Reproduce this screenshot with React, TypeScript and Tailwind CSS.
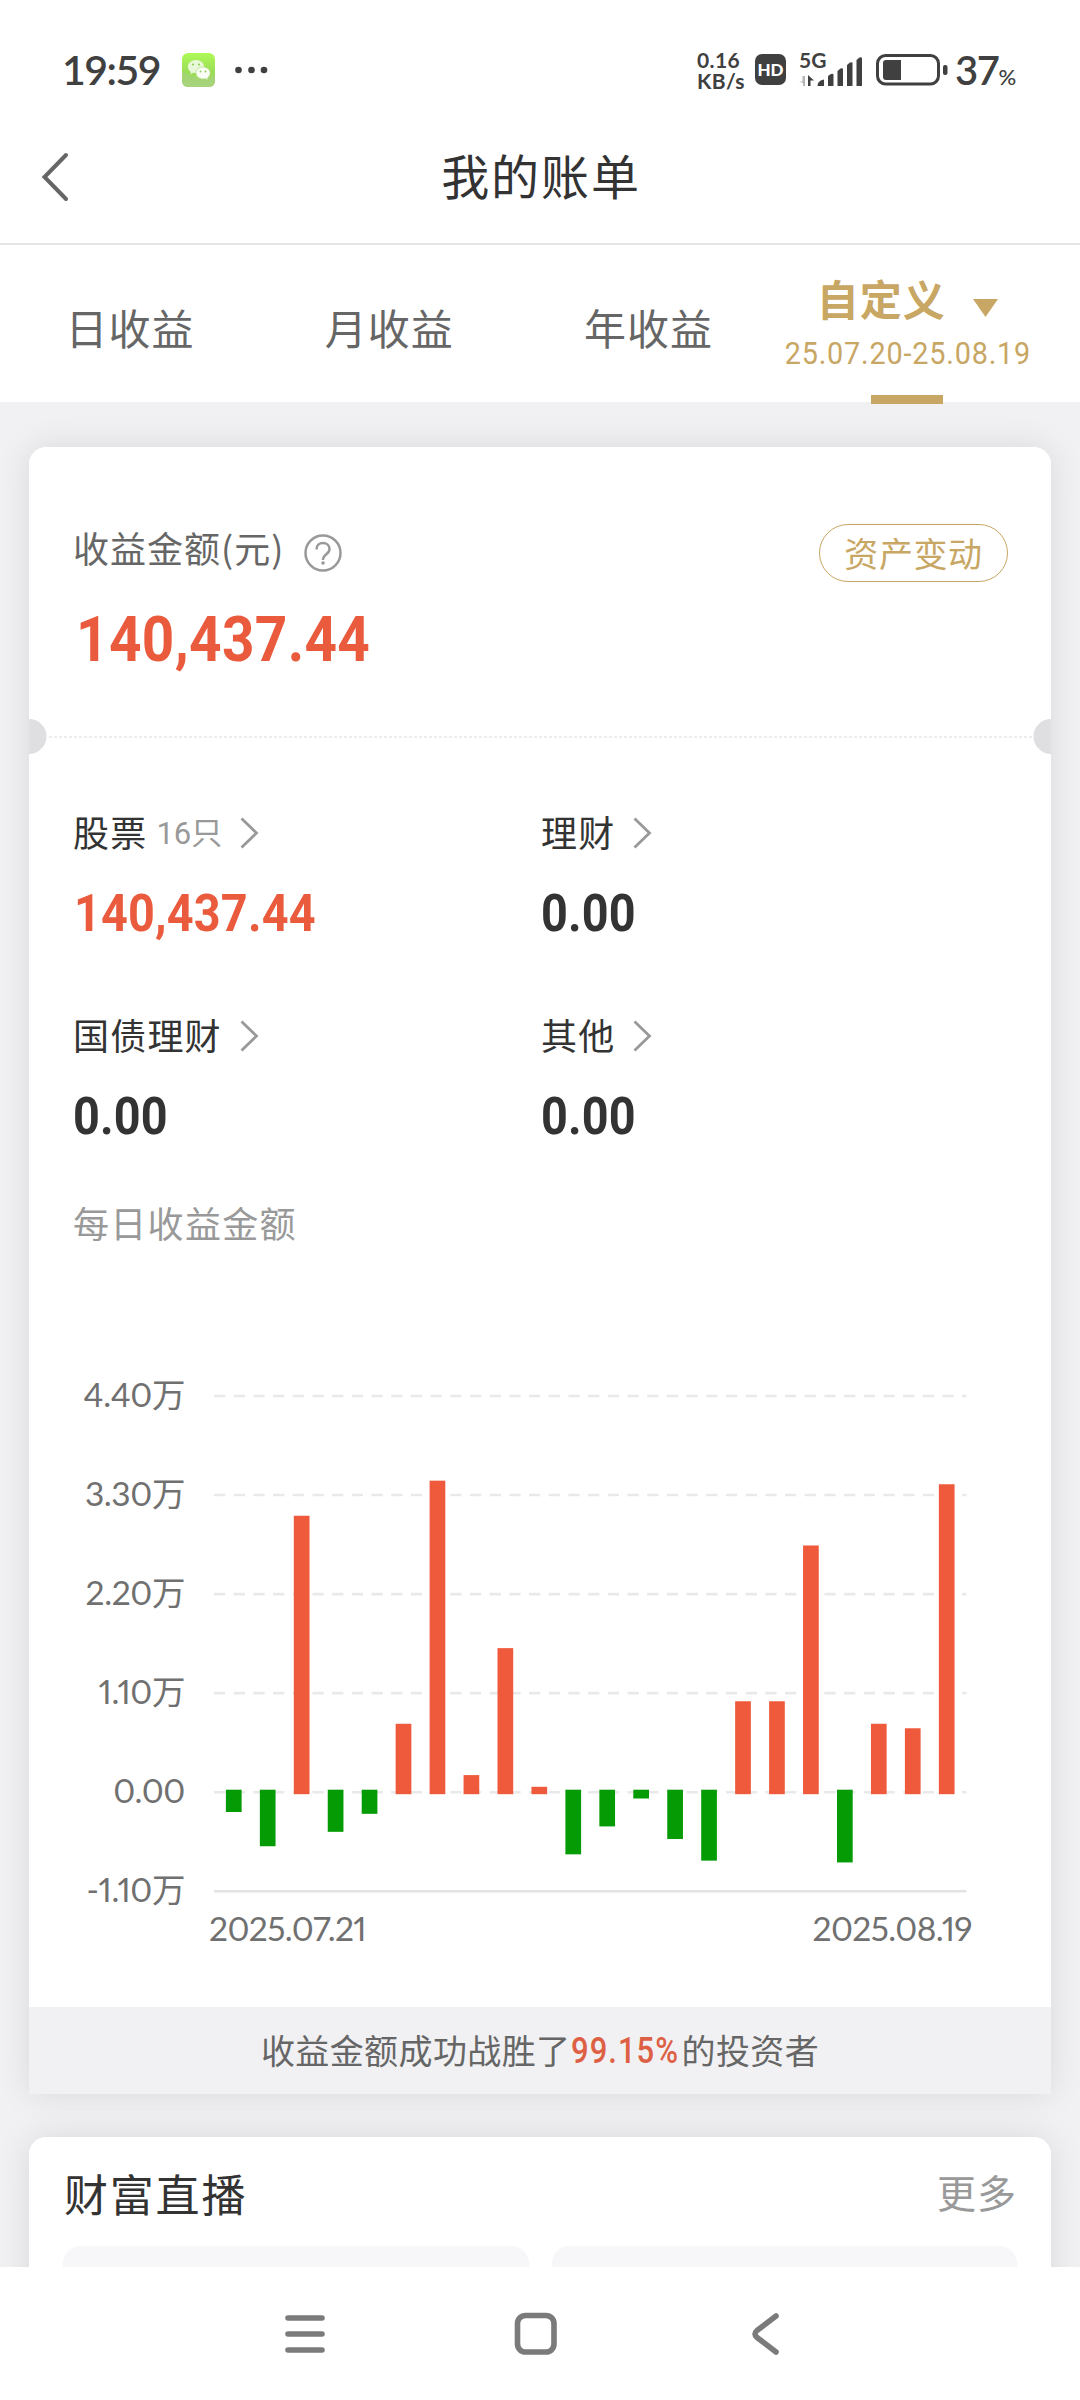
interface Holding {
  label: string;
  count?: string;
  amount: string;
  highlight?: boolean;
}

const holdings: Holding[] = [
  { label: "股票", count: "16只", amount: "140,437.44", highlight: true },
  { label: "理财", amount: "0.00" },
  { label: "国债理财", amount: "0.00" },
  { label: "其他", amount: "0.00" },
];

const tabs = ["日收益", "月收益", "年收益"];

// Daily profit, in 万
const dailyProfit = [
  -0.22, -0.6, 3.07, -0.44, -0.24, 0.76, 3.46, 0.19, 1.6, 0.06, -0.69, -0.38,
  -0.07, -0.52, -0.76, 1.01, 1.01, 2.74, -0.78, 0.76, 0.71, 3.42,
];

const yLabels = ["4.40万", "3.30万", "2.20万", "1.10万", "0.00", "-1.10万"];

const STEP = 99.05;
const TOP = 2;
const ZERO = TOP + STEP * 4;
const PER_WAN = STEP / 1.1;

function WeChatIcon() {
  return (
    <svg width="33" height="34" viewBox="0 0 33 34">
      <defs>
        <linearGradient id="wechat" x1="0" y1="0" x2="0" y2="1">
          <stop offset="0" stopColor="#adfa56" />
          <stop offset="0.6" stopColor="#9bdb58" />
          <stop offset="1" stopColor="#add584" />
        </linearGradient>
      </defs>
      <rect width="33" height="34" rx="6" fill="url(#wechat)" />
      <path d="M0 19 C6 20 10 26 20 26 C26 26 30 24 33 23 V28 Q33 34 27 34 H6 Q0 34 0 28Z" fill="#a5d37b" opacity="0.7" />
      <path d="M14 7c-4.600 0-8 3-8 6.700 0 2.200 1.100 4 2.900 5.200l-.8 2.400 3-1.500c1 .3 2 .4 3 .4 4.500 0 8-2.900 8-6.500S18.600 7 14 7Z" fill="#e9f8d8" />
      <path d="M21 14c-4 0-7 2.700-7 6s3 6 7 6c.9 0 1.700-.1 2.500-.3l2.600 1.500-.6-2.300c1.600-1.100 2.700-2.900 2.700-4.900 0-3.300-3.200-6-7.200-6Z" fill="#fbfef6" stroke="#a0d967" strokeWidth="0.6" />
      <g fill="#8fcf58">
        <circle cx="11" cy="11.500" r="1.100" />
        <circle cx="17" cy="11.500" r="1.100" />
        <circle cx="18.500" cy="18.500" r="1" />
        <circle cx="23.500" cy="18.500" r="1" />
      </g>
    </svg>
  );
}

function SignalIcon() {
  return (
    <svg width="63" height="12" viewBox="0 0 63 12" className="overflow-visible">
      <path d="M6 1v10H4V8L0 6.500h3.500V1Z" fill="#b5b5b5" />
      <path d="M9 11V0l6 5.500h-3.500V11Z" fill="#404040" />
      <g fill="#404040">
        <path d="M18.500 11 Q18.500 5.500 25 4.500 V11Z" />
        <path d="M29 11V1l3-2q2.500-1 2.500 1v11Z" />
        <path d="M38.500 11V-4l3-2.500q2.500-1 2.500 1V11Z" />
        <path d="M48 11V-10l3-2.500q2.500-1 2.500 1V11Z" />
        <path d="M57.500 11V-15l3-2.500q2.500-1 2.500 1V11Z" />
      </g>
    </svg>
  );
}

function StatusBar() {
  return (
    <div className="flex h-[139px] items-center justify-between pl-[62px] pr-[64px] font-['Lato',sans-serif] text-[#404040]">
      <div className="flex items-center">
        <span className="w-[120px] text-[41px] leading-none font-semibold tracking-[-1.500px]">19:59</span>
        <WeChatIcon />
        <svg width="34" height="8" className="ml-5">
          <circle cx="3.500" cy="4" r="3.300" fill="#404040" />
          <circle cx="16.500" cy="4" r="3.300" fill="#404040" />
          <circle cx="29" cy="4" r="3.300" fill="#404040" />
        </svg>
      </div>
      <div className="flex items-center">
        <div className="w-[58px] text-[21px] leading-[21px] font-bold tracking-[0.400px]">
          <p>0.16</p>
          <p>KB/s</p>
        </div>
        <div className="flex h-[31px] w-[31px] items-center justify-center rounded-[7px] bg-[#404040] text-[17px] leading-none font-black text-white">
          HD
        </div>
        <div className="ml-[13px] flex h-[38px] w-[63px] flex-col justify-between pb-[2px]">
          <span className="text-[21px] leading-[17px] font-bold">5G</span>
          <SignalIcon />
        </div>
        <svg width="72" height="32" viewBox="0 0 72 32" className="ml-[14px]">
          <rect x="1.500" y="1.500" width="61" height="28.500" rx="8" fill="none" stroke="#404040" strokeWidth="3" />
          <path d="M7 9q0-3 3-3h15v20H10q-3 0-3-3Z" fill="#404040" />
          <rect x="67" y="11" width="4.500" height="10" rx="2" fill="#404040" />
        </svg>
        <div className="ml-[7px] flex w-[61px] items-baseline">
          <span className="text-[40px] leading-none font-semibold tracking-[-1.500px]">37</span>
          <span className="text-[22px] leading-none font-medium">%</span>
        </div>
      </div>
    </div>
  );
}

function Header() {
  return (
    <header className="grid h-[106px] grid-cols-[1fr_auto_1fr] items-start border-b-2 border-[#e5e5e5]">
      <svg width="30" height="50" viewBox="0 0 30 50" className="mt-[13px] ml-[41px]" fill="none" stroke="#666" strokeWidth="4" strokeLinecap="round">
        <path d="M25 3 3.500 25 25 47" />
      </svg>
      <h1 className="mt-[11px] ml-[2px] text-[48px] leading-none tracking-[1.900px] text-[#333]">我的账单</h1>
    </header>
  );
}

function Tabs() {
  return (
    <nav className="grid h-[157px] grid-cols-4 pr-[43px]">
      {tabs.map((tab) => (
        <div key={tab} className="pt-[61px] pl-px text-center text-[42px] leading-none tracking-[1px] text-[#666]">
          {tab}
        </div>
      ))}
      <div className="flex flex-col items-center text-[#c8a664]">
        <div className="mt-[32px] flex items-center">
          <span className="text-[42px] leading-none font-bold tracking-[1px]">自定义</span>
          <svg width="25" height="18" className="mt-[20px] ml-[27px]">
            <path d="M0 0h25L12.500 18Z" fill="#c8a664" />
          </svg>
        </div>
        <span className="mt-[18px] scale-x-90 font-['Roboto',sans-serif] text-[32px] leading-none tracking-[0.900px] whitespace-nowrap">
          25.07.20-25.08.19
        </span>
        <div className="z-10 mt-[26px] h-[9px] w-[72px] shrink-0 bg-[#c8a664]" />
      </div>
    </nav>
  );
}

function Chevron() {
  return (
    <svg width="19" height="32" viewBox="0 0 19 32" fill="none" stroke="#999" strokeWidth="2.800">
      <path d="M1.500 1.500 16.500 16 1.500 30.500" />
    </svg>
  );
}

function Summary() {
  return (
    <section className="flex h-[289px] justify-between pt-[72px] pr-[43px] pl-[44px]">
      <div>
        <div className="flex items-center">
          <span className="mt-[3px] text-[36px] leading-[38px] tracking-[1px] text-[#666]">收益金额(元)</span>
          <svg width="38" height="38" viewBox="0 0 38 38" className="mt-[15px] ml-[20px]" fill="none" stroke="#999" strokeWidth="2.500">
            <circle cx="19" cy="19" r="17.500" />
            <path d="M12.500 15.500c0-4 2.800-6.500 6.500-6.500s6.500 2.400 6.500 6c0 2.600-1.500 4-3.500 5.500-2 1.600-3 2.700-3 5.500" />
            <circle cx="19" cy="29" r="1.800" fill="#999" stroke="none" />
          </svg>
        </div>
        <div className="mt-[36px] ml-[3px] w-[320px] origin-left scale-x-90 font-['Roboto',sans-serif] text-[63px] leading-none font-bold tracking-[0.400px] text-[#ea5b3e]">
          140,437.44
        </div>
      </div>
      <button className="mt-[5px] h-[58px] w-[189px] rounded-full border-[1.500px] border-[#c8a664] text-[34px] leading-none tracking-[0.600px] text-[#c8a664]">
        资产变动
      </button>
    </section>
  );
}

// Ticket-style separator with a notch on either edge
function TicketDivider() {
  return (
    <svg width="1022" height="35" viewBox="0 0 1022 35" className="-my-[17px] shrink-0">
      <circle cx="0" cy="17.500" r="17.500" fill="#dfdfe2" />
      <circle cx="1022" cy="17.500" r="17.500" fill="#dfdfe2" />
      <line x1="20" x2="1004" y1="18" y2="18" stroke="#ededed" strokeWidth="2" strokeDasharray="3 2" />
    </svg>
  );
}

function HoldingCell({ item }: { item: Holding }) {
  return (
    <div className="h-[203px]">
      <div className="flex h-[38px] items-center">
        <span className="pb-[4px] text-[36px] leading-none tracking-[1.200px] text-[#333]">{item.label}</span>
        {item.count && (
          <span className="ml-[9px] font-['Roboto','Noto_Sans_CJK_SC',sans-serif] text-[31px] leading-none text-[#999]">
            {item.count}
          </span>
        )}
        <span className="ml-[18px]">
          <Chevron />
        </span>
      </div>
      <div
        className={`mt-[36px] w-[280px] origin-left scale-x-90 font-['Roboto',sans-serif] text-[52px] leading-none font-bold tracking-[0.200px] ${
          item.highlight ? "ml-px text-[#ea5b3e]" : "text-[#333]"
        }`}
      >
        {item.amount}
      </div>
    </div>
  );
}

function ProfitChart() {
  return (
    <div className="pt-[105px] pl-[45px]">
      <div className="flex">
        <div className="w-[111px]">
          {yLabels.map((label) => (
            <div
              key={label}
              className="flex h-[99px] items-center justify-end font-['Lato','Noto_Sans_CJK_SC',sans-serif] text-[33.500px] leading-none tracking-[-0.400px] proportional-nums whitespace-nowrap text-[#707070]"
            >
              {label}
            </div>
          ))}
        </div>
        <svg width="754" height="500" viewBox="0 0 754 500" className="mt-[49px] ml-[29px]">
          {yLabels.map((label, i) => (
            <line
              key={label}
              x1="0"
              x2="752.500"
              y1={TOP + STEP * i}
              y2={TOP + STEP * i}
              stroke={i === 5 ? "#e3e3e3" : "#e9e9e9"}
              strokeWidth="2.600"
              strokeDasharray={i === 5 ? undefined : "11.250 8.440"}
            />
          ))}
          {dailyProfit.map((v, i) => {
            const end = ZERO - v * PER_WAN;
            const y = v > 0 ? end : ZERO - 2.5;
            const bottom = v > 0 ? ZERO + 2 : end;
            return (
              <rect
                key={i}
                x={11.9 + i * 33.95}
                y={y}
                width="15.700"
                height={bottom - y}
                fill={v > 0 ? "#ef5a3c" : "#049b04"}
              />
            );
          })}
        </svg>
      </div>
      <div className="-mt-[27px] ml-[135px] flex w-[763px] justify-between font-['Lato',sans-serif] text-[33.500px] leading-none tracking-[-0.600px] proportional-nums text-[#707070]">
        <span>2025.07.21</span>
        <span>2025.08.19</span>
      </div>
    </div>
  );
}

function BillCard() {
  return (
    <div className="flex h-[1647px] flex-col rounded-t-[17px] bg-white shadow-[0_0_34px_rgba(0,0,0,0.1)]">
      <Summary />
      <TicketDivider />
      <div className="mt-[77px] grid grid-cols-[468px_1fr] pl-[44px]">
        {holdings.map((item) => (
          <HoldingCell key={item.label} item={item} />
        ))}
      </div>
      <div className="-mt-[16px] pl-[44px] text-[36px] leading-none tracking-[1.300px] text-[#999]">每日收益金额</div>
      <ProfitChart />
      <div className="mt-auto flex h-[87px] items-center justify-center bg-[#f1f1f3] pb-[1px] text-[34px] leading-none tracking-[0.400px] text-[#666]">
        收益金额成功战胜了
        <span className="mt-[2px] w-[111px] origin-left scale-x-[0.86] font-['Roboto',sans-serif] text-[36px] font-medium tracking-[1.200px] text-[#dd6045]">
          99.15%
        </span>
        的投资者
      </div>
    </div>
  );
}

function LiveCard() {
  return (
    <div className="mt-[43px] h-[400px] rounded-[17px] bg-white px-[34px] shadow-[0_0_34px_rgba(0,0,0,0.1)]">
      <div className="flex h-[109px] items-center justify-between">
        <h2 className="mt-[2px] ml-px text-[44px] leading-none tracking-[1.800px] text-[#333]">财富直播</h2>
        <span className="text-[39px] leading-none tracking-[1px] text-[#999]">更多</span>
      </div>
      <div className="grid grid-cols-2 gap-[23px]">
        <div className="h-[260px] rounded-[17px] bg-[#f7f7fa]" />
        <div className="h-[260px] rounded-[17px] bg-[#f7f7fa]" />
      </div>
    </div>
  );
}

function NavigationBar() {
  return (
    <div className="flex h-[133px] items-center bg-white pl-[284px]">
      <svg width="500" height="50" viewBox="0 0 500 50" fill="none" stroke="#7b7b7b" strokeWidth="5.600" strokeLinecap="round" strokeLinejoin="round">
        <path d="M4 9h34M4 25h34M4 41h34" />
        <rect x="233.500" y="6.500" width="36.500" height="36.500" rx="8" />
        <path d="M492 7 473 21.500q-4 3.500 0 7L492 43" />
      </svg>
    </div>
  );
}

export default function App() {
  return (
    <div className="flex h-[2400px] w-[1080px] flex-col overflow-hidden bg-white font-['Noto_Sans_CJK_SC',sans-serif]">
      <StatusBar />
      <Header />
      <Tabs />
      <main className="h-[1865px] overflow-hidden bg-[#f1f1f3] px-[29px] pt-[45px]">
        <BillCard />
        <LiveCard />
      </main>
      <NavigationBar />
    </div>
  );
}
